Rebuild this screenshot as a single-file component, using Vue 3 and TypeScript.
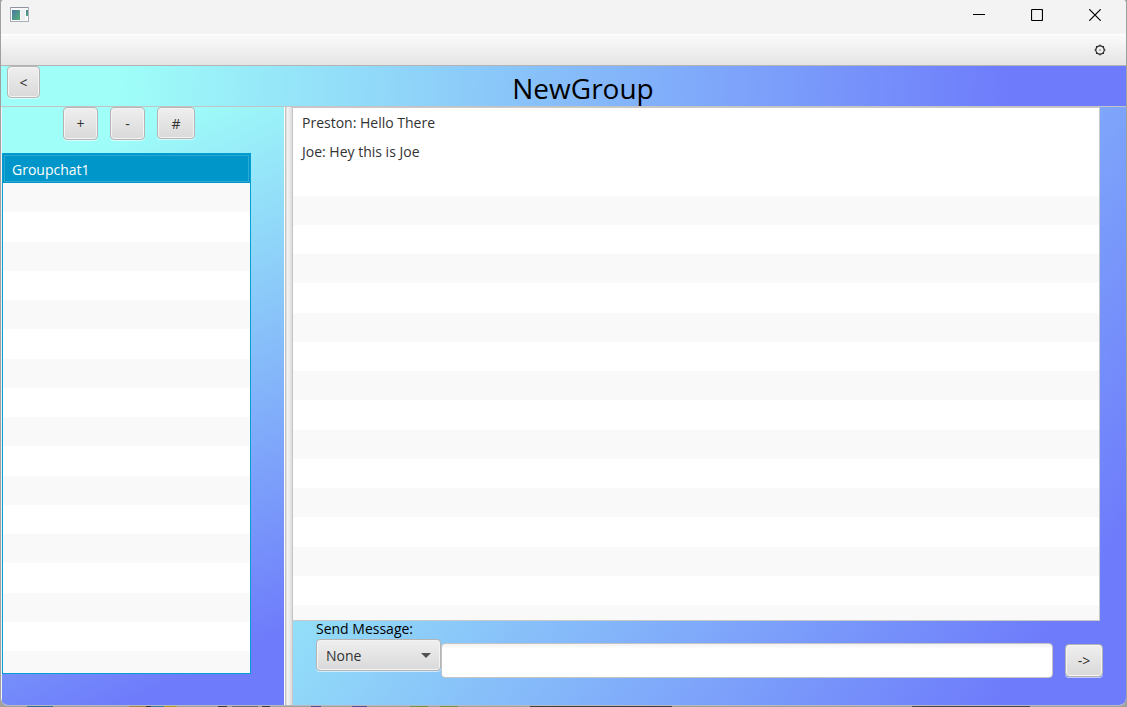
<script setup lang="ts">
import { ref } from 'vue'

interface Row {
  id: number
  text: string
}

const ROW_COUNT = 60

function fill(texts: string[]): Row[] {
  return Array.from({ length: ROW_COUNT }, (_, id) => ({ id, text: texts[id] ?? '' }))
}

const groups = fill(['Groupchat1'])
const messages = fill(['Preston: Hello There', 'Joe: Hey this is Joe'])
const selected = ref(0)
const draft = ref('')
const mode = ref('None')
</script>

<template>
  <div class="desktop">
    <div class="window">
      <div class="titlebar">
        <svg class="app-icon" width="20" height="16" viewBox="0 0 20 16" aria-hidden="true">
          <defs>
            <linearGradient id="pane" x1="0" y1="0" x2="1" y2="1">
              <stop offset="0" stop-color="#4a78a8" />
              <stop offset="1" stop-color="#55b070" />
            </linearGradient>
          </defs>
          <rect x="0.5" y="0.5" width="18" height="14" fill="#f7f8f9" stroke="#a9adb8" />
          <path d="M1 0.5H18" stroke="#8d939e" />
          <rect x="2" y="3" width="8" height="10" fill="url(#pane)" />
          <rect x="11" y="3" width="4" height="10" fill="#eceeef" />
          <rect x="16" y="3" width="2" height="6" fill="url(#pane)" />
        </svg>
        <div class="controls">
          <button type="button" aria-label="Minimize">
            <svg width="12" height="12" viewBox="0 0 12 12"><path d="M0 5.5H12" stroke="#000" /></svg>
          </button>
          <button type="button" aria-label="Maximize">
            <svg width="12" height="12" viewBox="0 0 12 12"><rect x="0.5" y="0.5" width="11" height="11" rx="1" fill="none" stroke="#000" stroke-width="1.2" /></svg>
          </button>
          <button type="button" aria-label="Close">
            <svg width="12" height="12" viewBox="0 0 12 12"><path d="M0.3 0.3L11.7 11.7M11.7 0.3L0.3 11.7" stroke="#000" stroke-width="1.2" /></svg>
          </button>
        </div>
      </div>

      <div class="toolbar">
        <button type="button" class="settings" aria-label="Settings">
          <svg width="12" height="12" viewBox="0 0 12 12" fill="none" stroke="#2a2a2a">
            <circle cx="6" cy="6" r="4.2" stroke-width="1.2" />
            <path d="M6 0.5V2M6 10V11.5M0.5 6H2M10 6H11.5M2 2L3 3M9 9L10 10M10 2L9 3M3 9L2 10M5.4 6H6.6" />
          </svg>
        </button>
      </div>

      <header class="header">
        <button type="button" class="btn back">&lt;</button>
        <h1>NewGroup</h1>
      </header>

      <div class="split">
        <aside class="side">
          <div class="actions">
            <button type="button" class="btn">+</button>
            <button type="button" class="btn">-</button>
            <button type="button" class="btn hash">#</button>
          </div>
          <ul class="list groups">
            <li v-for="row in groups" :key="row.id" :class="{ selected: row.id === selected }">{{ row.text }}</li>
          </ul>
        </aside>
        <div class="divider"></div>
        <main class="chat">
          <ul class="list messages">
            <li v-for="row in messages" :key="row.id" :class="{ filled: row.text }">{{ row.text }}</li>
          </ul>
          <form class="composer" @submit.prevent>
            <label for="message">Send Message:</label>
            <div class="fields">
              <div class="combo">
                <select v-model="mode" aria-label="Message type">
                  <option>None</option>
                </select>
                <svg width="10" height="5" viewBox="0 0 10 5" aria-hidden="true"><path d="M0 0H10L5 5Z" fill="#505050" /></svg>
              </div>
              <input id="message" v-model="draft" type="text" autocomplete="off" />
              <button type="submit" class="btn send">-&gt;</button>
            </div>
          </form>
        </main>
      </div>
    </div>
  </div>
</template>

<style>
body {
  margin: 0;
}
</style>

<style scoped>
.desktop {
  box-sizing: border-box;
  height: 100vh;
  padding-bottom: 1px;
  overflow: hidden;
  background: linear-gradient(
    90deg,
    #a0a09c 0 27px, #2d6c93 27px 53px,
    #a0a09c 53px 129px, #9c8a4c 129px 146px, #3a3a3a 146px 151px, #3a7f9c 151px 164px, #a89c28 164px 177px,
    #a0a09c 177px 218px, #3a3a3a 218px 227px, #a0a09c 227px 232px, #6a6a68 232px 258px, #a0a09c 258px 262px, #3a3a3a 262px 270px,
    #a0a09c 270px 311px, #5b4a94 311px 321px, #a0a09c 321px 352px, #5b4a94 352px 367px,
    #a0a09c 367px 410px, #5f9a48 410px 428px, #a0a09c 428px 440px, #5f9a48 440px 458px,
    #a0a09c 458px 530px, #3c4040 530px 672px,
    #a0a09c 672px 912px, #454545 912px 1030px, #a0a09c 1030px
  );
  font-family: 'Open Sans', 'Noto Sans', sans-serif;
  font-size: 14px;
  color: #323232;
}
.window {
  box-sizing: border-box;
  display: flex;
  flex-direction: column;
  height: 100%;
  overflow: hidden;
  border: 1px solid #a0a0a0;
  border-top: 0;
  border-bottom-color: #b8b8c0;
  border-radius: 4px 4px 8px 8px;
  background: #f3f3f3;
}
button,
select,
input {
  box-sizing: border-box;
  margin: 0;
  font: inherit;
  color: inherit;
}
.titlebar {
  display: flex;
  flex: none;
  justify-content: space-between;
  height: 34px;
  padding: 0 2px 0 9px;
  background: #f3f3f3;
}
.app-icon {
  margin-top: 7px;
}
.controls {
  display: flex;
  height: 30px;
}
.controls button {
  display: flex;
  align-items: center;
  justify-content: center;
  width: 58px;
  padding: 0;
  border: 0;
  background: none;
}
.toolbar {
  box-sizing: border-box;
  display: flex;
  flex: none;
  align-items: center;
  justify-content: flex-end;
  height: 32px;
  padding-right: 20px;
  border-top: 1px solid #fff;
  border-bottom: 1px solid #b4b4b4;
  background: linear-gradient(#fbfbfb, #e4e4e4);
}
.settings {
  display: flex;
  padding: 0;
  border: 0;
  background: none;
}
.header {
  display: flex;
  flex: none;
  height: 40px;
  padding-left: 6px;
  border-bottom: 1px solid #c4c4c4;
  background: linear-gradient(92deg, #9ffff8 10%, #6e7bfb 90%);
}
h1 {
  flex: 1;
  margin: 0;
  font-size: 28px;
  font-weight: 400;
  line-height: 44px;
  text-align: center;
  color: #000;
}
.btn {
  flex: none;
  width: 35px;
  height: 33px;
  padding: 0;
  border: 1px solid #b4b4b4;
  border-radius: 4px;
  background: linear-gradient(#efefef, #d9d9d9);
  box-shadow: inset 0 0 0 1px #f4f4f4, 0 1px 0 rgba(255, 255, 255, 0.6);
}
.back {
  width: 33px;
  height: 32px;
}
.hash {
  width: 38px;
  height: 32px;
}
.send {
  width: 38px;
}
.split {
  display: grid;
  flex: 1;
  grid-template-columns: 282px 9px 1fr;
  min-height: 0;
  padding: 0 0 0 1px;
}
.side {
  box-sizing: border-box;
  display: flex;
  flex-direction: column;
  min-height: 0;
  padding-bottom: 31px;
  background: linear-gradient(155deg, #9ffff8 10%, #6e7bfb 90%);
}
.actions {
  display: flex;
  flex: none;
  gap: 12px;
  height: 46px;
  padding-left: 61px;
}
.list {
  box-sizing: border-box;
  flex: 1;
  min-height: 0;
  margin: 0;
  padding: 0;
  overflow: hidden;
  list-style: none;
  background: #fff;
}
.list li {
  box-sizing: border-box;
  height: 29px;
  padding-left: 9px;
  line-height: 29px;
}
.list li:nth-child(4n + 3) {
  height: 30px;
}
.list li:nth-child(even) {
  background: #f9f9f9;
}
.list li.filled {
  background: #fff;
}
.groups {
  margin-right: 33px;
  border: 1px solid #039ed3;
}
.list li.selected {
  background: #0096c9;
  box-shadow: inset 0 0 0 1px #0096c9, inset 0 0 0 2px #2ba8d4;
  line-height: 31px;
  color: #fff;
}
.divider {
  box-sizing: border-box;
  border-left: 1px solid #fff;
  border-right: 1px solid #c4c4c4;
  background: linear-gradient(90deg, #c4c4c4 0 1px, #f6f6f6 2px, #dcdcdc);
}
.chat {
  display: flex;
  flex-direction: column;
  min-width: 0;
  min-height: 0;
  background: linear-gradient(126deg, #9ffff8 10%, #6e7bfb 90%);
}
.messages {
  margin-right: 26px;
  border: 1px solid #c8c8c8;
  border-left: 0;
}
.composer {
  display: flex;
  flex: none;
  flex-direction: column;
  height: 84px;
  padding: 0 23px;
}
.composer label {
  margin-bottom: 2px;
  line-height: 16px;
  color: #000;
}
.fields {
  display: flex;
  align-items: flex-start;
}
.combo {
  position: relative;
  flex: none;
  width: 125px;
}
.combo select {
  width: 100%;
  height: 32px;
  padding: 0 9px;
  appearance: none;
  border: 1px solid #b4b4b4;
  border-radius: 4px;
  background: linear-gradient(#efefef, #d9d9d9);
  box-shadow: inset 0 0 0 1px #f4f4f4, 0 1px 0 rgba(255, 255, 255, 0.6);
}
.combo svg {
  position: absolute;
  top: 14px;
  right: 10px;
  pointer-events: none;
}
.fields input {
  flex: 1;
  min-width: 0;
  height: 35px;
  margin-top: 4px;
  padding: 0 9px;
  border: 1px solid #c4c4c4;
  border-radius: 4px;
  background: linear-gradient(#f2f2f2, #fff 5px);
}
.send {
  margin: 5px 0 0 12px;
}
</style>
